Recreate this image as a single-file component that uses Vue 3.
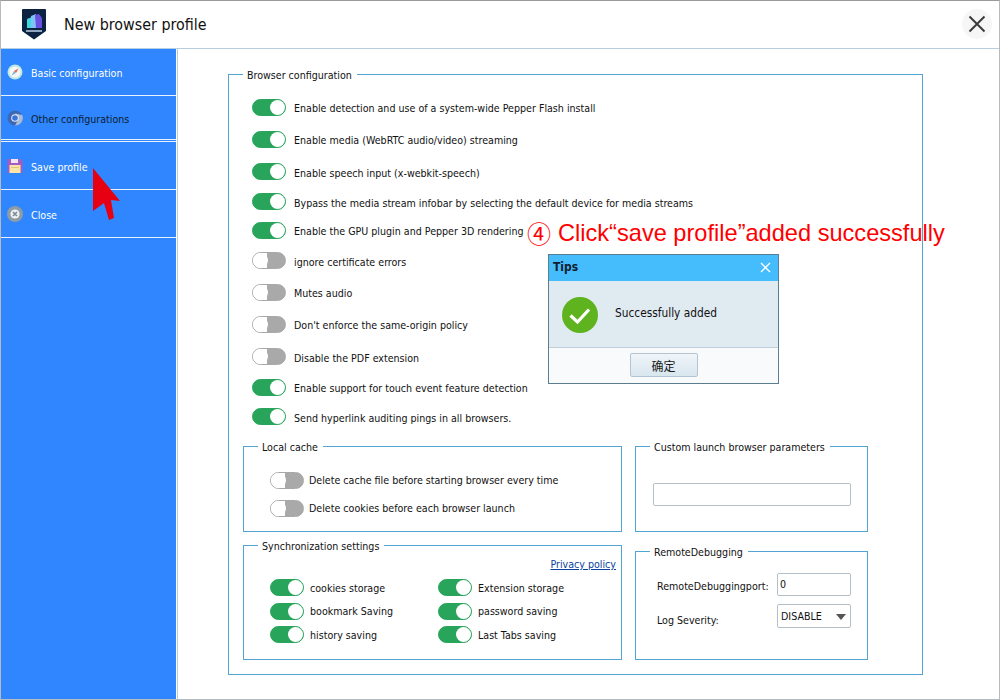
<script setup>
const mainOptions = [
  { label: 'Enable detection and use of a system-wide Pepper Flash install', on: true, h: 32 },
  { label: 'Enable media (WebRTC audio/video) streaming', on: true, h: 32 },
  { label: 'Enable speech input (x-webkit-speech)', on: true, h: 33 },
  { label: 'Bypass the media stream infobar by selecting the default device for media streams', on: true, h: 27 },
  { label: 'Enable the GPU plugin and Pepper 3D rendering', on: true, h: 30 },
  { label: 'ignore certificate errors', on: false, h: 31 },
  { label: 'Mutes audio', on: false, h: 32 },
  { label: "Don't enforce the same-origin policy", on: false, h: 32 },
  { label: 'Disable the PDF extension', on: false, h: 33 },
  { label: 'Enable support for touch event feature detection', on: true, h: 28 },
  { label: 'Send hyperlink auditing pings in all browsers.', on: true, h: 31 }
]
const cacheOptions = [
  'Delete cache file before starting browser every time',
  'Delete cookies before each browser launch'
]
const syncOptions = [
  'cookies storage', 'Extension storage',
  'bookmark Saving', 'password saving',
  'history saving', 'Last Tabs saving'
]
</script>

<template>
  <div class="window">
    <header class="titlebar">
      <svg class="logo" width="26" height="32" viewBox="0 0 26 32">
        <path d="M2 1 L24 1 Q25 1 25 2 L25 23 L13 31.500 L1 23 L1 2 Q1 1 2 1 Z" fill="#0b2340" />
        <path d="M6 11 L11 9 L11 20 L6 20 Z" fill="#3fd8e0" />
        <path d="M10 8 L15 6 L15 20 L10 20 Z" fill="#7fc4f5" />
        <path d="M14 7 L18 6 L21 10 L21 20 L15 20 Z" fill="#6a4fe0" />
        <rect x="5" y="22" width="16" height="2" fill="#8fa6c0" />
      </svg>
      <span class="title">New browser profile</span>
      <button class="close-btn">
        <svg width="18" height="18" viewBox="0 0 18 18">
          <path d="M1.500 1.500 L16.500 16.500 M16.500 1.500 L1.500 16.500" stroke="#3c3c3c" stroke-width="2" fill="none" />
        </svg>
      </button>
    </header>

    <div class="body">
      <nav class="sidebar">
        <div class="nav-item item-basic">
          <svg class="nav-icon" width="16" height="16" viewBox="0 0 16 16">
            <circle cx="8" cy="8" r="7.500" fill="#bfe6e2" />
            <circle cx="8" cy="8" r="5.600" fill="#f4f8f6" />
            <path d="M11.500 4.500 L9 9 L7 7 Z" fill="#e8604f" />
            <path d="M4.500 11.500 L7 7 L9 9 Z" fill="#8fb4c8" />
          </svg>
          <span>Basic configuration</span>
        </div>
        <div class="nav-item item-other">
          <svg class="nav-icon" width="16" height="16" viewBox="0 0 16 16">
            <circle cx="8" cy="8" r="7.500" fill="#3f68b4" />
            <path d="M8 3.500 L15.200 5 A7.500 7.500 0 0 1 8 15.500 L11 10 Z" fill="#a8bcd8" />
            <circle cx="8" cy="8" r="3.800" fill="#e8eef6" />
            <circle cx="8" cy="8" r="2.800" fill="#3b74d8" />
          </svg>
          <span>Other configurations</span>
        </div>
        <div class="nav-item item-save">
          <svg class="nav-icon" width="16" height="16" viewBox="0 0 16 16">
            <path d="M0.500 1 L13 1 L15.500 3.500 L15.500 15 L0.500 15 Z" fill="#a45cc0" />
            <rect x="4" y="1" width="7" height="4" fill="#f2e6f6" />
            <rect x="2.500" y="7" width="11" height="8" fill="#fbe6a8" />
            <rect x="4" y="9" width="8" height="1" fill="#e2c878" />
          </svg>
          <span>Save profile</span>
        </div>
        <div class="nav-item item-close">
          <svg class="nav-icon" width="16" height="16" viewBox="0 0 16 16">
            <circle cx="8" cy="8" r="8" fill="#8e9ca6" />
            <circle cx="8" cy="8" r="4.600" fill="#eef1f3" />
            <path d="M6 6 L10 10 M10 6 L6 10" stroke="#7d8a94" stroke-width="1.600" />
          </svg>
          <span>Close</span>
        </div>
      </nav>

      <main class="content">
        <fieldset class="group config">
          <legend>Browser configuration</legend>
          <div class="config-body">
            <div class="main-options">
              <label
                v-for="opt in mainOptions"
                :key="opt.label"
                class="option"
                :style="{ height: opt.h + 'px' }"
              >
                <span class="toggle" :class="{ on: opt.on }"></span>
                <span class="main-label">{{ opt.label }}</span>
              </label>
            </div>

            <div class="lower">
              <div class="lower-left">
                <fieldset class="group cache">
                  <legend>Local cache</legend>
                  <div class="cache-body">
                    <label v-for="c in cacheOptions" :key="c" class="option cache-option">
                      <span class="toggle"></span>
                      <span>{{ c }}</span>
                    </label>
                  </div>
                </fieldset>
                <fieldset class="group sync">
                  <legend>Synchronization settings</legend>
                  <div class="sync-body">
                    <a class="privacy">Privacy policy</a>
                    <div class="sync-grid">
                      <label v-for="s in syncOptions" :key="s" class="option">
                        <span class="toggle on"></span>
                        <span>{{ s }}</span>
                      </label>
                    </div>
                  </div>
                </fieldset>
              </div>
              <div class="lower-right">
                <fieldset class="group custom">
                  <legend>Custom launch browser parameters</legend>
                  <div class="custom-body">
                    <div class="input wide"></div>
                  </div>
                </fieldset>
                <fieldset class="group remote">
                  <legend>RemoteDebugging</legend>
                  <div class="remote-body">
                    <div class="field-row">
                      <span class="port-label">RemoteDebuggingport:</span>
                      <div class="input small">0</div>
                    </div>
                    <div class="field-row log-row">
                      <span class="log-label">Log Severity:</span>
                      <div class="input small select">
                        DISABLE
                        <i class="caret"></i>
                      </div>
                    </div>
                  </div>
                </fieldset>
              </div>
            </div>
          </div>
        </fieldset>
      </main>
    </div>

    <!-- annotation drawn over the screenshot -->
    <div class="note"><span class="note-num">④</span><span>Click“save profile”added successfully</span></div>
    <svg class="arrow" width="30" height="54" viewBox="0 0 30 54">
      <path d="M0 0 L27 33 L18 32 L21 50 L16 52 L11 35 L0 43 Z" fill="#e60012" />
    </svg>

    <div class="tips">
      <div class="tips-head">
        <b>Tips</b>
        <svg width="11" height="11" viewBox="0 0 11 11">
          <path d="M1 1 L10 10 M10 1 L1 10" stroke="#ffffff" stroke-width="1.400" />
        </svg>
      </div>
      <div class="tips-body">
        <svg class="tips-check" width="38" height="38" viewBox="0 0 38 38">
          <circle cx="19" cy="19" r="18" fill="#5fb31f" />
          <path d="M9.500 19.500 L16.500 26 L28 13.500" stroke="#ffffff" stroke-width="3.200" fill="none" />
        </svg>
        <span class="tips-text">Successfully added</span>
      </div>
      <div class="tips-foot">
        <button class="ok">确定</button>
      </div>
    </div>
  </div>
</template>

<style scoped>
.window {
  position: relative;
  width: 1000px;
  height: 700px;
  box-sizing: border-box;
  border: 1px solid #b4bcc2;
  border-top-color: #9a9a9a;
  background: #ffffff;
  overflow: hidden;
  font-family: "DejaVu Sans", "Noto Sans CJK SC", sans-serif;
  font-stretch: condensed;
  font-size: 10.600px;
  color: #111111;
}
.titlebar {
  display: flex;
  align-items: center;
  height: 47px;
  padding-left: 20px;
  border-bottom: 1px solid #b5cfe0;
  box-sizing: content-box;
}
.logo {
  margin-top: -2px;
}
.title {
  margin-left: 17px;
  font-size: 15.900px;
  color: #111111;
}
.close-btn {
  display: flex;
  align-items: center;
  justify-content: center;
  width: 30px;
  height: 30px;
  margin: -2px 7px 0 auto;
  padding: 0;
  border: 0;
  border-radius: 50%;
  background: #f6f6f6;
}
.body {
  display: flex;
  height: 651px;
}
.sidebar {
  width: 175px;
  background: #2f86ff;
  border-right: 1px solid #ffffff;
  box-shadow: 1px 0 0 #b5cfe0;
  flex-shrink: 0;
}
.nav-item {
  display: flex;
  align-items: center;
  box-sizing: border-box;
  padding-left: 6px;
  border-bottom: 1px solid #e8f2ff;
  color: #ffffff;
}
.nav-item span {
  margin-top: 2px;
}
.nav-icon {
  margin-right: 8px;
}
.item-basic { height: 47px; padding-bottom: 1px; }
.item-other { height: 44px; color: #0c1c30; }
.item-save { height: 49px; margin-top: 1px; border-top: 1px solid #e8f2ff; }
.item-close { height: 48px; }
.content {
  flex: 1;
  padding: 16px 0 0 51px;
}
.group {
  margin: 0;
  padding: 0;
  border: 1px solid #52a5d3;
  box-sizing: border-box;
  min-width: 0;
}
.group legend {
  margin-left: 14px;
  padding: 2px 5px 0 4px;
  line-height: 16px;
  white-space: nowrap;
}
.config {
  width: 695px;
  height: 610px;
}
.config-body {
  padding: 8px 0 0 14px;
}
.main-options {
  display: flex;
  flex-direction: column;
  padding-left: 9px;
}
.option {
  display: flex;
  align-items: center;
  gap: 8px;
}
.main-label {
  margin-top: 2px;
}
.toggle {
  display: block;
  position: relative;
  width: 34px;
  height: 17px;
  box-sizing: border-box;
  border: 1px solid #a8a8a8;
  border-radius: 9px;
  background: linear-gradient(to right, #ffffff 45%, #a9a9a9 45%);
}
.toggle::after {
  content: "";
  position: absolute;
  left: 0;
  top: 0;
  width: 15px;
  height: 15px;
  border-radius: 50%;
  background: #ffffff;
}
.toggle.on {
  border-color: #28a55a;
  background: #28a55a;
}
.toggle.on::after {
  left: auto;
  right: 0;
}
.lower {
  display: flex;
  gap: 13px;
  margin-top: 5px;
}
.lower-left {
  display: flex;
  flex-direction: column;
  gap: 4px;
  width: 379px;
}
.lower-right {
  display: flex;
  flex-direction: column;
  gap: 10px;
  width: 233px;
}
.cache {
  height: 95px;
}
.cache-body {
  padding: 11px 0 0 26px;
}
.cache-option {
  height: 28px;
  gap: 5px;
}
.sync {
  height: 124px;
}
.sync-body {
  padding: 2px 5px 0 26px;
}
.privacy {
  display: block;
  text-align: right;
  color: #0b3f9e;
  text-decoration: underline;
  line-height: 16px;
}
.sync-grid {
  display: grid;
  grid-template-columns: 168px 1fr;
  grid-auto-rows: 23.500px;
  margin-top: 4px;
}
.sync-grid .option {
  gap: 6px;
}
.custom {
  height: 95px;
}
.custom-body {
  padding: 28px 0 0 17px;
}
.input {
  box-sizing: border-box;
  height: 23px;
  border: 1px solid #b4c0c8;
  border-radius: 2px;
  background: #ffffff;
  padding-left: 2px;
  line-height: 21px;
}
.wide {
  width: 198px;
}
.remote {
  height: 118px;
}
.remote-body {
  padding: 13px 0 0 21px;
}
.field-row {
  display: flex;
  align-items: center;
  justify-content: space-between;
  width: 194px;
}
.port-label {
  margin-top: 2px;
}
.log-row {
  margin-top: 8px;
}
.log-label {
  margin-top: 7px;
}
.small {
  width: 74px;
}
.select {
  position: relative;
  height: 24px;
  padding-left: 3px;
  line-height: 23px;
}
.caret {
  position: absolute;
  right: 4px;
  top: 9px;
  border: 5px solid transparent;
  border-top: 6px solid #555555;
  border-bottom: 0;
}
.note {
  position: absolute;
  left: 526px;
  top: 216px;
  display: flex;
  gap: 7px;
  font-family: "Liberation Sans", sans-serif;
  font-stretch: normal;
  font-size: 23.600px;
  line-height: 32px;
  color: #ff0000;
  white-space: nowrap;
}
.note-num {
  font-family: "Noto Sans CJK SC", sans-serif;
  font-size: 24px;
}
.arrow {
  position: absolute;
  left: 92px;
  top: 167px;
}
.tips {
  position: absolute;
  left: 547px;
  top: 253px;
  width: 231px;
  height: 130px;
  box-sizing: border-box;
  border: 1px solid #5a7d90;
  background: #f8fafc;
}
.tips-head {
  display: flex;
  align-items: center;
  justify-content: space-between;
  height: 26px;
  padding: 0 7px 2px 4px;
  box-sizing: border-box;
  background: #45bdfd;
  font-size: 12px;
  color: #10202c;
}
.tips-body {
  display: flex;
  align-items: center;
  gap: 16px;
  height: 66px;
  padding-left: 12px;
  background: #e0eaf1;
  border-bottom: 1px solid #bfcfdc;
}
.tips-check {
  margin-top: 2px;
}
.tips-text {
  margin-bottom: 2px;
  font-size: 11.800px;
}
.tips-foot {
  display: flex;
  justify-content: center;
  padding-top: 5px;
}
.ok {
  width: 68px;
  height: 24px;
  padding: 0;
  border: 1px solid #b4c4d0;
  border-radius: 2px;
  background: linear-gradient(#f0f5f8, #d8e6ee);
  font: inherit;
  font-size: 12px;
  color: #1a1a1a;
}
</style>
